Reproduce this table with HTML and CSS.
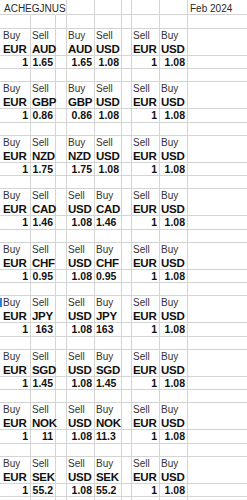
FILE: index.html
```html
<!DOCTYPE html>
<html>
<head>
<meta charset="utf-8">
<link rel="stylesheet" href="styles.css">
</head>
<body>
<div class="sheet">
  <div class="row head">
    <span class="c over"><span class="t">ACHEGJNUS</span></span><span class="c over"></span><span class="c"></span><span class="c"></span><span class="c"></span><span class="c"></span><span class="c"></span><span class="c"></span><span class="c last"><span class="t">Feb 2024</span></span>
  </div>
  <div class="row gap top"><span class="c"></span><span class="c"></span><span class="c"></span><span class="c"></span><span class="c"></span><span class="c"></span><span class="c"></span><span class="c"></span><span class="c last"></span></div>

  <!-- AUD -->
  <div class="row lab">
    <span class="c"><i>Buy</i><b>EUR</b></span><span class="c"><i>Sell</i><b>AUD</b></span><span class="c"></span><span class="c"><i>Buy</i><b>AUD</b></span><span class="c"><i>Sell</i><b>USD</b></span><span class="c"></span><span class="c"><i>Sell</i><b>EUR</b></span><span class="c"><i>Buy</i><b>USD</b></span><span class="c last"></span>
  </div>
  <div class="row num">
    <span class="c r">1</span><span class="c r">1.65</span><span class="c"></span><span class="c r">1.65</span><span class="c r">1.08</span><span class="c"></span><span class="c r">1</span><span class="c r">1.08</span><span class="c last"></span>
  </div>
  <div class="row gap"><span class="c"></span><span class="c"></span><span class="c"></span><span class="c"></span><span class="c"></span><span class="c"></span><span class="c"></span><span class="c"></span><span class="c last"></span></div>

  <!-- GBP -->
  <div class="row lab">
    <span class="c"><i>Buy</i><b>EUR</b></span><span class="c"><i>Sell</i><b>GBP</b></span><span class="c"></span><span class="c"><i>Buy</i><b>GBP</b></span><span class="c"><i>Sell</i><b>USD</b></span><span class="c"></span><span class="c"><i>Sell</i><b>EUR</b></span><span class="c"><i>Buy</i><b>USD</b></span><span class="c last"></span>
  </div>
  <div class="row num">
    <span class="c r">1</span><span class="c r">0.86</span><span class="c"></span><span class="c r">0.86</span><span class="c r">1.08</span><span class="c"></span><span class="c r">1</span><span class="c r">1.08</span><span class="c last"></span>
  </div>
  <div class="row gap"><span class="c"></span><span class="c"></span><span class="c"></span><span class="c"></span><span class="c"></span><span class="c"></span><span class="c"></span><span class="c"></span><span class="c last"></span></div>

  <!-- NZD -->
  <div class="row lab">
    <span class="c"><i>Buy</i><b>EUR</b></span><span class="c"><i>Sell</i><b>NZD</b></span><span class="c"></span><span class="c"><i>Buy</i><b>NZD</b></span><span class="c"><i>Sell</i><b>USD</b></span><span class="c"></span><span class="c"><i>Sell</i><b>EUR</b></span><span class="c"><i>Buy</i><b>USD</b></span><span class="c last"></span>
  </div>
  <div class="row num">
    <span class="c r">1</span><span class="c r">1.75</span><span class="c"></span><span class="c r">1.75</span><span class="c r">1.08</span><span class="c"></span><span class="c r">1</span><span class="c r">1.08</span><span class="c last"></span>
  </div>
  <div class="row gap"><span class="c"></span><span class="c"></span><span class="c"></span><span class="c"></span><span class="c"></span><span class="c"></span><span class="c"></span><span class="c"></span><span class="c last"></span></div>

  <!-- CAD -->
  <div class="row lab">
    <span class="c"><i>Buy</i><b>EUR</b></span><span class="c"><i>Sell</i><b>CAD</b></span><span class="c"></span><span class="c"><i>Sell</i><b>USD</b></span><span class="c"><i>Buy</i><b>CAD</b></span><span class="c"></span><span class="c"><i>Sell</i><b>EUR</b></span><span class="c"><i>Buy</i><b>USD</b></span><span class="c last"></span>
  </div>
  <div class="row num">
    <span class="c r">1</span><span class="c r">1.46</span><span class="c"></span><span class="c r">1.08</span><span class="c l">1.46</span><span class="c"></span><span class="c r">1</span><span class="c r">1.08</span><span class="c last"></span>
  </div>
  <div class="row gap"><span class="c"></span><span class="c"></span><span class="c"></span><span class="c"></span><span class="c"></span><span class="c"></span><span class="c"></span><span class="c"></span><span class="c last"></span></div>

  <!-- CHF -->
  <div class="row lab">
    <span class="c"><i>Buy</i><b>EUR</b></span><span class="c"><i>Sell</i><b>CHF</b></span><span class="c"></span><span class="c"><i>Sell</i><b>USD</b></span><span class="c"><i>Buy</i><b>CHF</b></span><span class="c"></span><span class="c"><i>Sell</i><b>EUR</b></span><span class="c"><i>Buy</i><b>USD</b></span><span class="c last"></span>
  </div>
  <div class="row num">
    <span class="c r">1</span><span class="c r">0.95</span><span class="c"></span><span class="c r">1.08</span><span class="c l">0.95</span><span class="c"></span><span class="c r">1</span><span class="c r">1.08</span><span class="c last"></span>
  </div>
  <div class="row gap"><span class="c"></span><span class="c"></span><span class="c"></span><span class="c"></span><span class="c"></span><span class="c"></span><span class="c"></span><span class="c"></span><span class="c last"></span></div>

  <!-- JPY -->
  <div class="row lab">
    <span class="c sel"><i>Buy</i><b>EUR</b></span><span class="c"><i>Sell</i><b>JPY</b></span><span class="c"></span><span class="c"><i>Sell</i><b>USD</b></span><span class="c"><i>Buy</i><b>JPY</b></span><span class="c"></span><span class="c"><i>Sell</i><b>EUR</b></span><span class="c"><i>Buy</i><b>USD</b></span><span class="c last"></span>
  </div>
  <div class="row num">
    <span class="c r">1</span><span class="c r">163</span><span class="c"></span><span class="c r">1.08</span><span class="c l">163</span><span class="c"></span><span class="c r">1</span><span class="c r">1.08</span><span class="c last"></span>
  </div>
  <div class="row gap"><span class="c"></span><span class="c"></span><span class="c"></span><span class="c"></span><span class="c"></span><span class="c"></span><span class="c"></span><span class="c"></span><span class="c last"></span></div>

  <!-- SGD -->
  <div class="row lab">
    <span class="c"><i>Buy</i><b>EUR</b></span><span class="c"><i>Sell</i><b>SGD</b></span><span class="c"></span><span class="c"><i>Sell</i><b>USD</b></span><span class="c"><i>Buy</i><b>SGD</b></span><span class="c"></span><span class="c"><i>Sell</i><b>EUR</b></span><span class="c"><i>Buy</i><b>USD</b></span><span class="c last"></span>
  </div>
  <div class="row num">
    <span class="c r">1</span><span class="c r">1.45</span><span class="c"></span><span class="c r">1.08</span><span class="c l">1.45</span><span class="c"></span><span class="c r">1</span><span class="c r">1.08</span><span class="c last"></span>
  </div>
  <div class="row gap"><span class="c"></span><span class="c"></span><span class="c"></span><span class="c"></span><span class="c"></span><span class="c"></span><span class="c"></span><span class="c"></span><span class="c last"></span></div>

  <!-- NOK -->
  <div class="row lab">
    <span class="c"><i>Buy</i><b>EUR</b></span><span class="c"><i>Sell</i><b>NOK</b></span><span class="c"></span><span class="c"><i>Sell</i><b>USD</b></span><span class="c"><i>Buy</i><b>NOK</b></span><span class="c"></span><span class="c"><i>Sell</i><b>EUR</b></span><span class="c"><i>Buy</i><b>USD</b></span><span class="c last"></span>
  </div>
  <div class="row num">
    <span class="c r">1</span><span class="c r">11</span><span class="c"></span><span class="c r">1.08</span><span class="c l">11.3</span><span class="c"></span><span class="c r">1</span><span class="c r">1.08</span><span class="c last"></span>
  </div>
  <div class="row gap"><span class="c"></span><span class="c"></span><span class="c"></span><span class="c"></span><span class="c"></span><span class="c"></span><span class="c"></span><span class="c"></span><span class="c last"></span></div>

  <!-- SEK -->
  <div class="row lab">
    <span class="c"><i>Buy</i><b>EUR</b></span><span class="c"><i>Sell</i><b>SEK</b></span><span class="c"></span><span class="c"><i>Sell</i><b>USD</b></span><span class="c"><i>Buy</i><b>SEK</b></span><span class="c"></span><span class="c"><i>Sell</i><b>EUR</b></span><span class="c"><i>Buy</i><b>USD</b></span><span class="c last"></span>
  </div>
  <div class="row num">
    <span class="c r">1</span><span class="c r">55.2</span><span class="c"></span><span class="c r">1.08</span><span class="c l">55.2</span><span class="c"></span><span class="c r">1</span><span class="c r">1.08</span><span class="c last"></span>
  </div>
  <div class="row gap"><span class="c"></span><span class="c"></span><span class="c"></span><span class="c"></span><span class="c"></span><span class="c"></span><span class="c"></span><span class="c"></span><span class="c last"></span></div>
</div>
</body>
</html>
```

FILE: styles.css
```css
html, body {
  margin: 0;
  padding: 0;
  background: #ffffff;
}

body {
  width: 247px;
  height: 500px;
  overflow: hidden;
  font-family: "Liberation Sans", Arial, sans-serif;
  color: #1c1c1c;
}

.sheet {
  display: flex;
  flex-direction: column;
}

.row {
  display: grid;
  grid-template-columns: 31px 25px 11px 28px 27px 10px 28px 28px 59px;
}

.c {
  box-sizing: border-box;
  border-right: 1px solid #d4d4d4;
  border-bottom: 1px solid #d4d4d4;
  padding: 0 1px 0 1px;
  white-space: nowrap;
  overflow: visible;
  position: relative;
}

.c.last {
  border-right: none;
}

.head .c {
  height: 15px;
  font-size: 10px;
  line-height: 12px;
  padding-top: 3px;
  color: #2a2a2a;
}

.head .c.over {
  border-right-color: transparent;
  z-index: 1;
}

.head .c:first-child {
  padding-left: 4px;
}

.head .c.last {
  padding-left: 2px;
}

.gap .c {
  height: 13px;
}

.gap.top .c {
  height: 13.5px;
}

.lab .c {
  height: 27px;
  padding-top: 1px;
}

.lab .c:first-child {
  padding-left: 3px;
}

.lab i {
  display: block;
  font-style: normal;
  font-size: 10px;
  line-height: 12px;
  color: #333333;
}

.lab b {
  display: block;
  font-weight: bold;
  font-size: 11.5px;
  line-height: 14px;
  color: #111111;
  letter-spacing: -0.3px;
}

.num .c {
  height: 13.5px;
  font-size: 10.5px;
  font-weight: bold;
  line-height: 12.5px;
  color: #111111;
}

.num .c.r {
  text-align: right;
  padding-right: 2px;
}

.num .c.l {
  text-align: left;
  padding-left: 1px;
}

.sel::before {
  content: "";
  position: absolute;
  left: 0;
  top: 2px;
  width: 2px;
  height: 9px;
  background: #2f7fd6;
}
```
